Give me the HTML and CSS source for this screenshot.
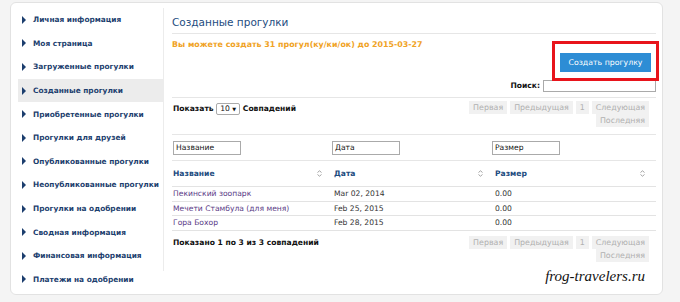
FILE: index.html
```html
<!DOCTYPE html>
<html lang="ru">
<head>
    <meta charset="UTF-8">
    <title>Созданные прогулки</title>
    <link rel="stylesheet" href="styles.css">
</head>
<body>
    <div class="card">
        <!-- меню слева -->
        <ul class="menu">
            <li><i></i>Личная информация</li>
            <li><i></i>Моя страница</li>
            <li><i></i>Загруженные прогулки</li>
            <li class="current"><i></i>Созданные прогулки</li>
            <li><i></i>Приобретенные прогулки</li>
            <li><i></i>Прогулки для друзей</li>
            <li><i></i>Опубликованные прогулки</li>
            <li><i></i>Неопубликованные прогулки</li>
            <li><i></i>Прогулки на одобрении</li>
            <li><i></i>Сводная информация</li>
            <li><i></i>Финансовая информация</li>
            <li><i></i>Платежи на одобрении</li>
        </ul>

        <div class="main">
            <h2>Созданные прогулки</h2>
            <p class="notice">Вы можете создать 31 прогул(ку/ки/ок) до 2015-03-27</p>
            <div class="btn-row">
                <span class="btn">Создать прогулку<span class="mark"></span></span>
            </div>
            <div class="search-row">
                <label>Поиск:</label><span class="input"></span>
            </div>

            <div class="tools">
                <div class="length">Показать <span class="select">10 <b>&#9660;</b></span> Совпадений</div>
                <div class="paginate">
                    <span>Первая</span><span>Предыдущая</span><span>1</span><span>Следующая</span><span>Последняя</span>
                </div>
            </div>

            <div class="filters">
                <div class="c1"><span class="input">Название</span></div>
                <div class="c2"><span class="input">Дата</span></div>
                <div><span class="input">Размер</span></div>
            </div>

            <table class="grid">
                <thead>
                    <tr>
                        <th class="c1">Название<svg class="sort" width="5" height="7" viewBox="0 0 5 7"><path d="M0.5 2.5 L2.5 0.8 L4.5 2.5 M0.5 4.5 L2.5 6.2 L4.5 4.5" fill="none" stroke="#999" stroke-width="0.9"/></svg></th>
                        <th class="c2">Дата<svg class="sort" width="5" height="7" viewBox="0 0 5 7"><path d="M0.5 2.5 L2.5 0.8 L4.5 2.5 M0.5 4.5 L2.5 6.2 L4.5 4.5" fill="none" stroke="#999" stroke-width="0.9"/></svg></th>
                        <th>Размер<svg class="sort" width="5" height="7" viewBox="0 0 5 7"><path d="M0.5 2.5 L2.5 0.8 L4.5 2.5 M0.5 4.5 L2.5 6.2 L4.5 4.5" fill="none" stroke="#999" stroke-width="0.9"/></svg></th>
                    </tr>
                </thead>
                <tbody>
                    <tr><td class="name">Пекинский зоопарк</td><td>Mar 02, 2014</td><td>0.00</td></tr>
                    <tr><td class="name">Мечети Стамбула (для меня)</td><td>Feb 25, 2015</td><td>0.00</td></tr>
                    <tr><td class="name">Гора Бохор</td><td>Feb 28, 2015</td><td>0.00</td></tr>
                </tbody>
            </table>

            <div class="tools bottom">
                <div class="info">Показано 1 по 3 из 3 совпадений</div>
                <div class="paginate">
                    <span>Первая</span><span>Предыдущая</span><span>1</span><span>Следующая</span><span>Последняя</span>
                </div>
            </div>

            <div class="site">frog-travelers.ru</div>
        </div>
    </div>
</body>
</html>
```

FILE: styles.css
```css
body{
    margin: 0;
    background: #f4f4f4;
    font-family: "DejaVu Sans", Verdana, sans-serif;
    font-size: 8px;
    color: #111;
}
.card{
    display: flex;
    width: 651px;
    height: 291px;
    margin: 2px 0 0 10px;
    background: #fff;
    border: 1px solid #e2e2e2;
    border-radius: 6px;
}

/* меню слева */
.menu{
    width: 145px;
    margin: 5px 0 0;
    padding: 0 0 0 7px;
    list-style: none;
    border-right: 1px solid #ececec;
    height: 263px;
}
.menu li{
    display: flex;
    align-items: center;
    height: 23.6px;
    padding-left: 4px;
    font-size: 7.4px;
    font-weight: bold;
    color: #1c3e6e;
    white-space: nowrap;
}
.menu li i{
    width: 0;
    height: 0;
    border-top: 4px solid transparent;
    border-bottom: 4px solid transparent;
    border-left: 4px solid #1c3e6e;
    margin-right: 7px;
}
.menu .current{
    background: #ececec;
}

/* основная часть */
.main{
    flex: 1;
    padding: 0 6px 0 8px;
    position: relative;
}
h2{
    margin: 0;
    padding-top: 13px;
    height: 17px;
    font-size: 10.5px;
    font-weight: normal;
    color: #1d4c80;
    border-bottom: 1px solid #e6e6e6;
}
.notice{
    margin: 6px 0 0;
    height: 11px;
    font-size: 7.9px;
    font-weight: bold;
    color: #f0a224;
}
.btn-row{
    display: flex;
    justify-content: flex-end;
    padding-right: 5px;
    margin-top: 2px;
}
.btn{
    position: relative;
    display: block;
    width: 91px;
    height: 19px;
    line-height: 19px;
    text-align: center;
    background: #2d8dd5;
    color: #fff;
    font-size: 7.8px;
}
.btn .mark{
    position: absolute;
    left: -8px;
    right: -8px;
    top: -12px;
    bottom: -9px;
    border: 3px solid #e8141b;
}
.search-row{
    display: flex;
    justify-content: flex-end;
    align-items: center;
    margin-top: 8px;
    height: 11px;
}
.search-row label{
    font-weight: bold;
    font-size: 7.6px;
    margin-right: 3px;
}
.input{
    display: inline-block;
    box-sizing: border-box;
    border: 1px solid #aaa;
    background: #fff;
    padding-left: 2px;
    font-size: 7.6px;
    line-height: 12px;
    height: 14px;
    width: 68px;
    vertical-align: middle;
}
.search-row .input{
    width: 113px;
    height: 12px;
}

.tools{
    display: flex;
    justify-content: space-between;
    align-items: flex-start;
    margin-top: 6px;
    padding: 2px 0 7px;
    border-top: 1px solid #e6e6e6;
    height: 27px;
}
.length, .info{
    font-weight: bold;
    font-size: 7.6px;
    padding: 3px 0 0 1px;
}
.select{
    display: inline-block;
    border: 1px solid #aaa;
    border-radius: 2px;
    padding: 0 3px;
    font-weight: normal;
    line-height: 10px;
}
.select b{
    font-size: 5px;
    vertical-align: middle;
}
.paginate{
    width: 196px;
    text-align: right;
    line-height: 13px;
    margin: 1px 7px 0 0;
}
.paginate span{
    display: inline-block;
    background: #f1f1f1;
    color: #b0b0b0;
    padding: 0 4px;
    margin-left: 3px;
    font-size: 7.9px;
    line-height: 13px;
}

.filters{
    display: flex;
    padding: 6px 0 5px;
    border-top: 1px solid #e6e6e6;
    border-bottom: 1px solid #e6e6e6;
}
.filters div{
    flex: 1;
    padding-left: 1px;
}
.filters .c1{
    flex: 0 0 158px;
}
.filters .c2{
    flex: 0 0 159px;
}

.grid{
    width: 100%;
    border-collapse: collapse;
    table-layout: fixed;
    font-size: 7.6px;
}
.grid th.c1{
    width: 159px;
}
.grid th.c2{
    width: 159px;
}
.grid th{
    text-align: left;
    color: #1d4c80;
    height: 25px;
    padding: 0 1px;
    border-bottom: 1px solid #e3e3e3;
}
.grid th .sort{
    float: right;
    margin: 1px 10px 0 0;
}
.grid td{
    height: 13.5px;
    padding: 0 1px;
    border-bottom: 1px solid #e3e3e3;
    color: #333;
}
.grid td.name{
    color: #5a3b86;
}

.bottom{
    border-top: none;
    margin-top: 2px;
}
.site{
    position: absolute;
    right: 17px;
    bottom: 9px;
    font-family: "Liberation Serif", "DejaVu Serif", serif;
    font-style: italic;
    font-size: 15px;
    color: #111;
}
```
